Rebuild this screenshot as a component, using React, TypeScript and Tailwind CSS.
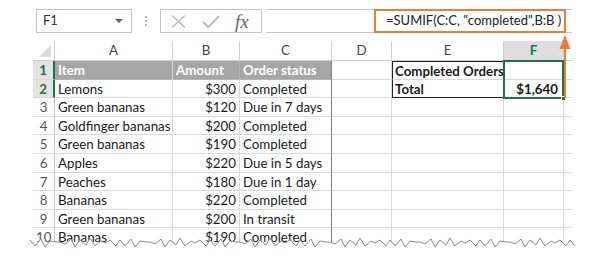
import React from "react";

const font = { fontFamily: "Lato, 'Noto Sans', sans-serif" };

const rows: [string, string, string][] = [
  ["Lemons", "$300", "Completed"],
  ["Green bananas", "$120", "Due in 7 days"],
  ["Goldfinger bananas", "$200", "Completed"],
  ["Green bananas", "$190", "Completed"],
  ["Apples", "$220", "Due in 5 days"],
  ["Peaches", "$180", "Due in 1 day"],
  ["Bananas", "$220", "Completed"],
  ["Green bananas", "$200", "In transit"],
  ["Bananas", "$190", "Completed"],
];

const letters = ["A", "B", "C", "D", "E", "F"];

function FormulaBar() {
  return (
    <div className="flex h-[24px] items-stretch pl-[36px]">
      <div className="flex w-[96px] items-center justify-between border border-[#c6c6c6] pl-[6px] pr-[8px] text-[13px] text-[#333]">
        <span>F1</span>
        <span className="h-0 w-0 border-x-[4px] border-t-[4px] border-x-transparent border-t-[#666]" />
      </div>
      <div className="flex w-[28px] flex-col items-center justify-center gap-[2px]">
        <span className="h-[2px] w-[2px] bg-[#b5b5b5]" />
        <span className="h-[2px] w-[2px] bg-[#b5b5b5]" />
        <span className="h-[2px] w-[2px] bg-[#b5b5b5]" />
      </div>
      <div className="flex w-[102px] items-center gap-[14px] border border-[#c6c6c6] pl-[9px]">
        <svg width="17" height="15" viewBox="0 0 17 15">
          <path d="M2 1.5 L15 13.5 M15 1.5 L2 13.5" stroke="#bdbdbd" strokeWidth="1.6" fill="none" />
        </svg>
        <svg width="20" height="15" viewBox="0 0 20 15">
          <path d="M2 8 L7.5 13 L18 2" stroke="#bdbdbd" strokeWidth="2" fill="none" />
        </svg>
        <span
          className="text-[19px] italic leading-none text-[#666]"
          style={{ fontFamily: "'Liberation Serif', serif" }}
        >
          fx
        </span>
      </div>
      <div className="ml-[4px] flex w-[306px] border-y border-[#c6c6c6]">
        <div className="w-[108px]" />
        <div className="relative -my-[1px] flex w-[192px] items-center whitespace-nowrap border-2 border-[#ed7d31] pl-[10px] text-[13px] text-[#222]">
          =SUMIF(C:C, "completed",B:B )
        </div>
      </div>
    </div>
  );
}

function Cell({
  children,
  className = "",
}: {
  children?: React.ReactNode;
  className?: string;
}) {
  return (
    <div
      className={`h-[18.6px] overflow-hidden whitespace-nowrap border-b border-r border-[#d9d9d9] px-[3px] text-[13.3px] leading-[18px] text-[#1a1a1a] ${className}`}
    >
      {children}
    </div>
  );
}

function Sheet() {
  return (
    <div className="relative ml-[33px] mt-[8px] grid w-[539px] grid-cols-[22px_118px_67px_92px_60px_112px_60px_8px]">
      {/* column headers */}
      <div className="relative h-[20px] border-b border-r border-[#d0d0d0]">
        <span className="absolute bottom-[3px] right-[3px] h-0 w-0 border-b-[12px] border-l-[12px] border-b-[#dcdcdc] border-l-transparent" />
      </div>
      {letters.map((l) => (
        <div
          key={l}
          className={`flex h-[20px] items-center justify-center border-b border-r border-[#d0d0d0] text-[13.3px] ${
            l === "F" ? "bg-[#dedede] font-bold text-[#217346]" : "text-[#444]"
          }`}
        >
          {l}
        </div>
      ))}
      <div className="h-[20px] border-b border-[#d0d0d0]" />

      {/* row 1 */}
      <Cell className="border-r-2 border-r-[#217346] bg-[#e3e3e3] text-center font-bold text-[#217346]">1</Cell>
      <Cell className="border-b-[#b5b5b5] bg-[#a6a6a6] font-bold text-white">Item</Cell>
      <Cell className="border-b-[#b5b5b5] border-r-[#b5b5b5] bg-[#a6a6a6] font-bold text-white">Amount</Cell>
      <Cell className="border-b-[#b5b5b5] border-r-[#7f7f7f] bg-[#a6a6a6] font-bold text-white">Order status</Cell>
      <Cell />
      <Cell className="border-l border-t border-l-[#222] border-t-[#222] pl-[2px] font-bold">Completed Orders</Cell>
      <Cell />
      <Cell className="border-r-0" />

      {/* row 2 */}
      <Cell className="border-r-2 border-r-[#217346] bg-[#e3e3e3] text-center font-bold text-[#217346]">2</Cell>
      <Cell>{rows[0][0]}</Cell>
      <Cell className="text-right">{rows[0][1]}</Cell>
      <Cell className="border-r-[#7f7f7f]">{rows[0][2]}</Cell>
      <Cell />
      <Cell className="border-b-[#222] border-l border-l-[#222] pl-[2px] font-bold">Total</Cell>
      <Cell className="pr-[5px] text-right font-bold">$1,640</Cell>
      <Cell className="border-r-0" />

      {rows.slice(1).map((r, i) => (
        <React.Fragment key={i}>
          <Cell className="border-r-[#c6c6c6] text-center text-[#555]">{i + 3}</Cell>
          <Cell>{r[0]}</Cell>
          <Cell className="text-right">{r[1]}</Cell>
          <Cell className="border-r-[#7f7f7f]">{r[2]}</Cell>
          <Cell />
          <Cell />
          <Cell />
          <Cell className="border-r-0" />
        </React.Fragment>
      ))}

      {/* selection F1:F2 */}
      <div className="pointer-events-none absolute left-[470px] top-[19px] h-[39px] w-[61px] border-2 border-[#217346]">
        <span className="absolute -bottom-[4px] -right-[4px] h-[5px] w-[5px] border border-white bg-[#217346]" />
      </div>
    </div>
  );
}

function TornEdge() {
  const pts: string[] = [];
  const jit = [0, 2, -1, 3, 1, -2, 2, 0, -1, 3, 0, 1, -2, 2, 1, -1, 0, 2];
  for (let k = 0, x = 30; x <= 576; k++, x += 4 + (k % 3)) {
    const y = (k % 2 === 0 ? 240 : 244) + jit[k % jit.length];
    pts.push(`${x},${y}`);
  }
  const line = pts.join(" ");
  return (
    <svg className="pointer-events-none absolute left-0 top-0" width="600" height="257">
      <polygon points={`0,257 0,241 ${line} 600,241 600,257`} fill="white" />
      <polyline points={line} fill="none" stroke="#888" strokeWidth="1" />
    </svg>
  );
}

export default function App() {
  return (
    <div className="relative h-[257px] w-[600px] overflow-hidden bg-white pt-[9px]" style={font}>
      <FormulaBar />
      <Sheet />
      <TornEdge />
      <svg className="pointer-events-none absolute left-0 top-0" width="600" height="257">
        <line x1="565" y1="98" x2="565" y2="44" stroke="#ed7d31" strokeWidth="2" />
        <polygon points="565,35 559.5,49 570.5,49" fill="#ed7d31" />
      </svg>
    </div>
  );
}
